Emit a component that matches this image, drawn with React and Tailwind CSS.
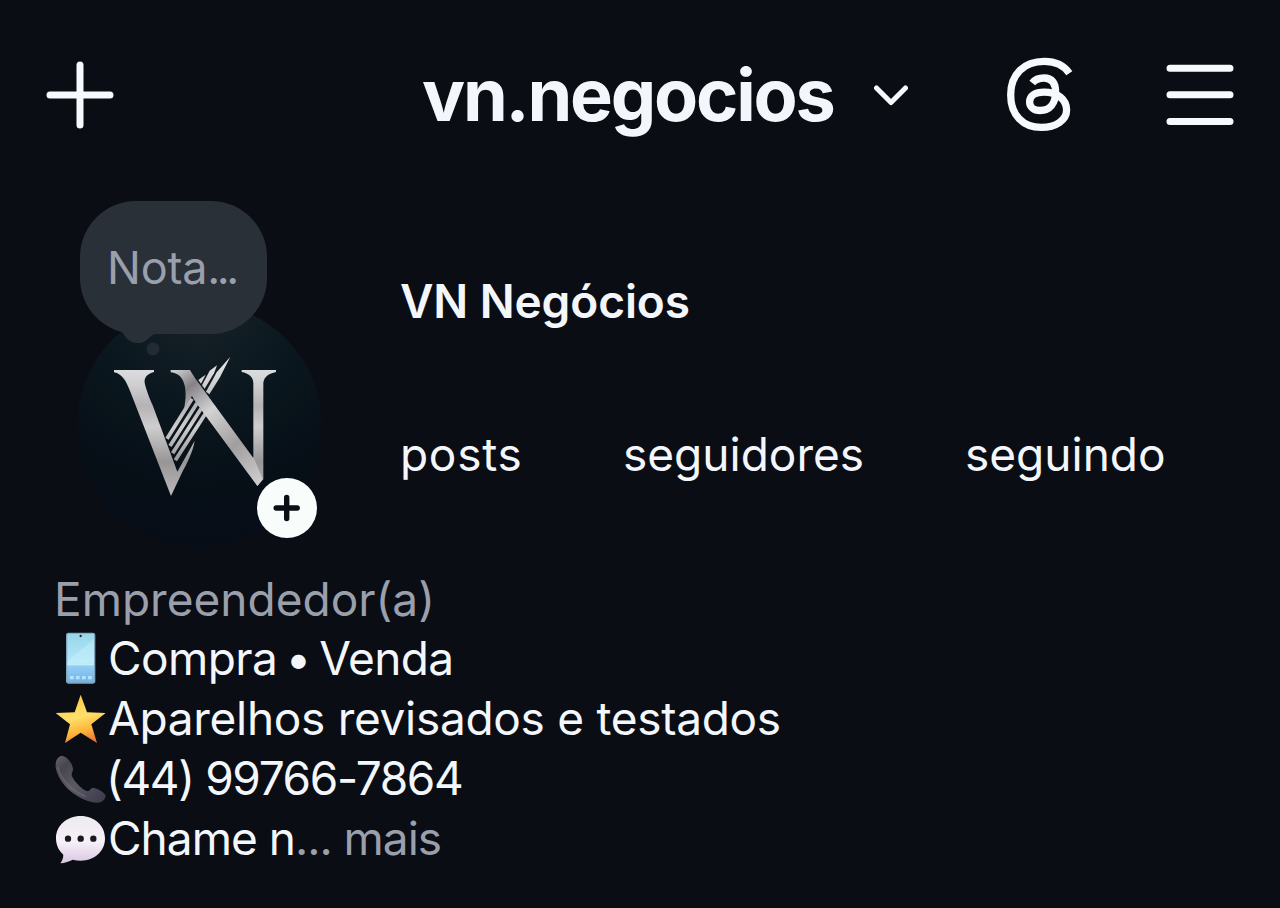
import clsx from 'clsx'

function PlusIcon() {
  return (
    <svg className="h-[68px] w-[68px]" viewBox="0 0 68 68" fill="none" stroke="#f7fafd" strokeWidth="7" strokeLinecap="round">
      <path d="M34 4v60M4 34h60" />
    </svg>
  )
}

function ThreadsIcon() {
  return (
    <svg className="h-20 w-[72px]" viewBox="0 0 72 80" fill="none" stroke="#f7fafd" strokeWidth="7.3" strokeLinejoin="round">
      <path d="M65.3 18.2C60 10.5 51 6.4 40.3 6.4C20 6.4 6.7 19 6.7 40C6.7 60 19 72.4 37.3 72.4C52 72.4 62.6 65 62.6 55C62.6 44 53 37.2 40 37.2C31 37.2 25.6 41 25.6 47C25.6 52 30 55.5 36 55.5C46 55.5 51.6 48 51.6 37C51.6 28 48 23 40 23C34.5 23 31 24.5 28.3 28" />
    </svg>
  )
}

function MenuIcon() {
  return (
    <svg className="h-[68px] w-[68px]" viewBox="0 0 68 68" fill="none" stroke="#f7fafd" strokeWidth="7" strokeLinecap="round">
      <path d="M4 7.2h60M4 33.8h60M4 60.5h60" />
    </svg>
  )
}

function Logo() {
  return (
    <svg className="h-full w-full" viewBox="21 -81 735 735">
      <defs>
        <linearGradient id="metal" x1="0" y1="80" x2="0" y2="500" gradientUnits="userSpaceOnUse">
          <stop offset="0" stopColor="#e6e8ea" />
          <stop offset="0.2" stopColor="#cfcfd2" />
          <stop offset="0.35" stopColor="#b4b2b4" />
          <stop offset="0.5" stopColor="#cfcecf" />
          <stop offset="0.75" stopColor="#989596" />
          <stop offset="1" stopColor="#bcbabb" />
        </linearGradient>
        <linearGradient id="diagonal" x1="310" y1="120" x2="570" y2="460" gradientUnits="userSpaceOnUse">
          <stop offset="0" stopColor="#cfcfd2" />
          <stop offset="0.16" stopColor="#858285" />
          <stop offset="0.38" stopColor="#d3d3d4" />
          <stop offset="0.68" stopColor="#a19e9f" />
          <stop offset="1" stopColor="#cfcdce" />
        </linearGradient>
      </defs>
      <g fill="url(#metal)">
        <path d="M132 120H252V126C232 132 222 142 224 158C227 174 238 204 248 226L322 425L374 332C370 362 352 398 338 424L303 498L181 185C168 152 157 132 132 127Z" />
        <path d="M515 120H618V126C596 131 582 141 580 158V448L562 468L550 440V160C550 141 536 130 515 126Z" />
        <path d="M408 185L418 193L450 142L481 80L440 127Z" />
        <path d="M396 166L404 176L432 130L441 106L419 122Z" />
        <path d="M385 150L393 161L407 134L396 142Z" />
      </g>
      <g stroke="url(#metal)" strokeWidth="11.5" fill="none">
        <path d="M291 326L366 206M300 348L381 220M308 370L393 236M316 391L406 251" />
      </g>
      <path fill="url(#diagonal)" d="M302 120H360C366 130 374 143 382 154L550 384V380L578 448L562 468L378 218L366 198C358 208 350 225 342 238C348 205 350 174 338 150C330 135 318 129 302 127Z" />
    </svg>
  )
}

function PhoneEmoji() {
  return (
    <svg className="h-[60px] w-[53px] shrink-0" viewBox="45 174 159 180">
      <defs>
        <linearGradient id="screen" x1="0" y1="0" x2="0" y2="1">
          <stop offset="0" stopColor="#98d6ea" />
          <stop offset="0.6" stopColor="#b4e8fb" />
          <stop offset="0.68" stopColor="#90cdf3" />
          <stop offset="1" stopColor="#76b2e6" />
        </linearGradient>
      </defs>
      <rect x="78" y="188" width="88" height="153" rx="7" fill="#7fa6bd" />
      <rect x="82" y="191" width="80" height="146" rx="4" fill="url(#screen)" />
      <path d="M82 275L162 206V280H82Z" fill="#c9f1fb" opacity=".45" />
      <path d="M82 283H162" stroke="#c3ecfd" strokeWidth="5" />
      <circle cx="122" cy="198" r="3.5" fill="#182a35" />
      <path d="M90 323h11M108 323h11M126 323h11M144 323h11" stroke="#b5e2ff" strokeWidth="10" />
    </svg>
  )
}

function StarEmoji() {
  return (
    <svg className="h-[60px] w-[53px] shrink-0" viewBox="45 354 159 180">
      <defs>
        <linearGradient id="star" x1="0.35" y1="0" x2="0.65" y2="1">
          <stop offset="0" stopColor="#fbc63c" />
          <stop offset="0.45" stopColor="#ffe06a" />
          <stop offset="0.75" stopColor="#fdb338" />
          <stop offset="1" stopColor="#e8703a" />
        </linearGradient>
      </defs>
      <path d="M122 374L141 427L197 429L154 463L171 519L122 488L75 519L90 463L47 429L104 427Z" fill="url(#star)" />
    </svg>
  )
}

function CallEmoji() {
  return (
    <svg className="h-[60px] w-[53px] shrink-0" viewBox="45 24 159 180">
      <defs>
        <linearGradient id="call" x1="0" y1="0" x2="1" y2="1">
          <stop offset="0" stopColor="#66656a" />
          <stop offset="0.2" stopColor="#47464c" />
          <stop offset="0.5" stopColor="#5b5963" />
          <stop offset="1" stopColor="#3a384a" />
        </linearGradient>
      </defs>
      <path d="M66 47C50 50 44 68 48 88C54 120 85 155 122 174C145 186 168 191 182 187C192 183 197 174 197 166C190 155 173 145 158 143C151 145 149 153 143 154C128 152 100 122 95 106C94 97 100 95 99 86C96 69 84 51 66 47Z" fill="url(#call)" />
      <path d="M54 84C62 118 95 152 134 168" stroke="#76747d" strokeWidth="6" strokeLinecap="round" opacity=".45" fill="none" />
    </svg>
  )
}

function ChatEmoji() {
  return (
    <svg className="h-[60px] w-[53px] shrink-0" viewBox="45 204 159 180">
      <defs>
        <linearGradient id="chat" x1="0" y1="0" x2="0" y2="1">
          <stop offset="0" stopColor="#eeebef" />
          <stop offset="0.55" stopColor="#f6f0f8" />
          <stop offset="1" stopColor="#d9c6e2" />
        </linearGradient>
      </defs>
      <path d="M122 228C80 228 48 257 48 295C48 315 56 332 70 344C70 354 66 363 61 370C75 369 88 364 98 359C106 361 114 362 122 362C164 362 195 334 195 295C195 257 164 228 122 228Z" fill="url(#chat)" />
      <g fill="#1c1820">
        <circle cx="84" cy="296" r="9.5" />
        <circle cx="122" cy="296" r="9.5" />
        <circle cx="160" cy="296" r="9.5" />
      </g>
    </svg>
  )
}

const stats = [
  { label: 'posts', className: 'w-[223px] tracking-[0.7px]' },
  { label: 'seguidores', className: 'w-[342px]' },
  { label: 'seguindo', className: 'w-[220px]' },
]

const bio = [
  { Icon: PhoneEmoji, text: 'Compra • Venda', className: 'tracking-[-0.6px] [word-spacing:-4px]' },
  { Icon: StarEmoji, text: 'Aparelhos revisados e testados', className: 'tracking-[-0.3px]' },
  { Icon: CallEmoji, text: '(44) 99766-7864', className: '-ml-[2px] tracking-[-1.35px]' },
  { Icon: ChatEmoji, text: 'Chame n', className: 'tracking-[-1px]', more: true },
]

function Header() {
  return (
    <header className="flex h-[189px] items-center pl-[46px]">
      <button className="shrink-0"><PlusIcon /></button>
      <button className="ml-[308px] flex w-[487px] shrink-0 items-center justify-between">
        <h1 className="whitespace-nowrap text-[72px] leading-[90px] font-bold tracking-[-2.2px]">vn.negocios</h1>
        <svg className="h-6 w-9" viewBox="0 0 36 24" fill="none" stroke="#f7fafd" strokeWidth="5" strokeLinecap="round" strokeLinejoin="round">
          <path d="M3.5 5L18 19.5L32.5 5" />
        </svg>
      </button>
      <button className="ml-[95px] shrink-0"><ThreadsIcon /></button>
      <button className="ml-[90px] shrink-0"><MenuIcon /></button>
    </header>
  )
}

function Avatar() {
  return (
    <div className="relative mt-[114px] ml-[77px] h-[245px] w-[245px] shrink-0">
      <div className="h-full w-full rounded-full bg-[radial-gradient(circle_at_50%_0%,#172329_0%,#0a161d_40%,#060e16_70%,#080d16_100%)]">
        <Logo />
      </div>
      <div className="absolute -top-[102px] left-[3px] flex h-[133px] w-[187px] items-center rounded-[56px] bg-[#2a3038] pl-[27px]">
        <span className="whitespace-nowrap text-[45px] tracking-[-0.2px] text-[#9a9fac]">
          Nota<span className="tracking-[-3.5px]">...</span>
        </span>
      </div>
      <svg className="absolute top-[26px] left-[44px] h-7 w-11" viewBox="0 0 44 28" fill="#2a3038">
        <path d="M2 4C6 12 12 14 18 14C25 14 28 7 34 5V0H2Z" />
        <circle cx="32" cy="20" r="6.5" fill="#222b33" />
      </svg>
      <button className="absolute top-[175px] left-[180px] h-[60px] w-[60px] rounded-full bg-[#f8fcfb]">
        <svg viewBox="0 0 60 60" fill="none" stroke="#0a0f15" strokeWidth="5.4" strokeLinecap="round">
          <path d="M29.7 19.5v21M19.2 30h21" />
        </svg>
      </button>
    </div>
  )
}

export default function App() {
  return (
    <main className="h-[908px] w-[1280px] overflow-hidden bg-[#0a0d14] font-['Inter',sans-serif] text-[#f3f7fb]">
      <Header />
      <section className="flex h-[380px]">
        <Avatar />
        <div className="ml-[78px] pt-[82px] text-[46px] leading-[60px]">
          <h2 className="font-semibold tracking-[-0.1px]">VN Negócios</h2>
          <div className="mt-[93px] flex">
            {stats.map(stat => (
              <span key={stat.label} className={clsx('shrink-0', stat.className)}>{stat.label}</span>
            ))}
          </div>
        </div>
      </section>
      <section className="pl-[55px] text-[46px] leading-[60px] whitespace-nowrap">
        <p className="-ml-px h-[59px] text-[#9a9fac]">Empreendedor(a)</p>
        {bio.map(({ Icon, text, className, more }) => (
          <p key={text} className="flex h-[60px]">
            <Icon />
            <span className={className}>{text}</span>
            {more && <span className="tracking-[-1px] text-[#9a9fac]">... mais</span>}
          </p>
        ))}
      </section>
    </main>
  )
}
